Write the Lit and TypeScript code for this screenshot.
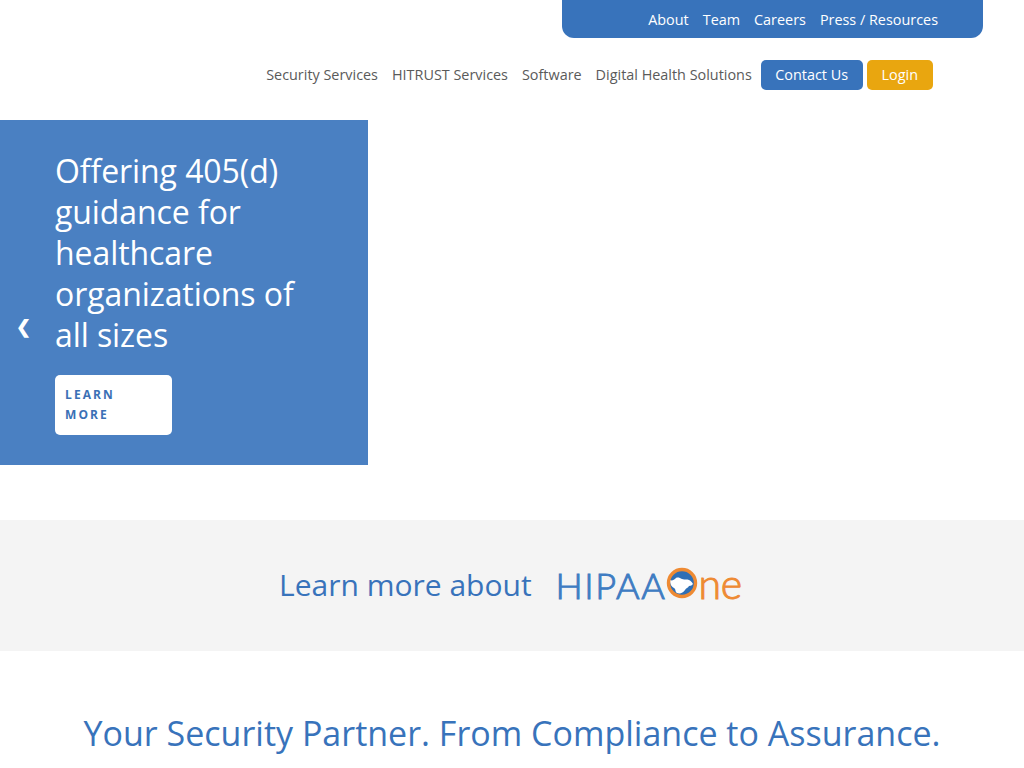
import { LitElement, css, html } from 'lit'
import { customElement } from 'lit/decorators.js'

@customElement('hipaa-logo')
export class HipaaLogo extends LitElement {
  static styles = css`
    :host {
      display: flex;
      align-items: center;
      height: 40px;
    }
    .word {
      font-family: 'Lato', 'Open Sans', sans-serif;
      font-weight: 300;
      line-height: 40px;
      -webkit-text-stroke: 1px currentColor;
    }
    .blue {
      color: #3f7cc2;
      font-size: 36px;
      letter-spacing: 1.6px;
      margin: -2px 0 0 0;
    }
    .orange {
      color: #ee8a33;
      font-size: 41px;
      letter-spacing: -0.2px;
      margin-top: -3px;
    }
    svg {
      display: block;
      margin: -5px 0 0 0;
    }
  `

  render() {
    return html`
      <span class="word blue">HIPAA</span>
      <svg width="32" height="32" viewBox="0 0 32 32" aria-hidden="true">
        <circle cx="16" cy="16" r="13.5" fill="#2f6fb5"></circle>
        <path d="M4 13c2 1 4 0 6-2 2-1 4 0 6 1 3 1 5 0 7 1 2 1 3 2 4 4-1 1-2 2-4 2-1 2-3 2-4 4-2 3-5 4-8 3-2-1-1-4-3-5-2-1-4-3-4-8z" fill="#fff"></path>
        <circle cx="16" cy="16" r="13.5" fill="none" stroke="#ee8a33" stroke-width="3.4"></circle>
      </svg>
      <span class="word orange">ne</span>
    `
  }
}

@customElement('app-root')
export class AppRoot extends LitElement {
  static styles = css`
    :host {
      display: block;
      width: 1024px;
      height: 768px;
      overflow: hidden;
      background: #fff;
      font-family: 'Open Sans', sans-serif;
      color: #5a5a5a;
    }
    a {
      color: inherit;
      text-decoration: none;
    }
    .top {
      display: flex;
      justify-content: flex-end;
      padding-right: 41px;
    }
    .top-nav {
      display: flex;
      gap: 14px;
      box-sizing: border-box;
      width: 421px;
      height: 38px;
      padding: 0 45px 0 0;
      justify-content: flex-end;
      align-items: center;
      background: #3873bb;
      border-radius: 0 0 12px 12px;
      color: #fff;
      font-size: 14.4px;
    }
    .main-nav {
      display: flex;
      align-items: center;
      justify-content: flex-end;
      height: 30px;
      margin-top: 22px;
      padding-right: 91px;
      font-size: 14.4px;
    }
    .main-nav a {
      margin-right: 14px;
      padding-bottom: 2px;
    }
    .main-nav a:nth-child(4) {
      margin-right: 9px;
    }
    .main-nav .btn {
      display: flex;
      align-items: center;
      box-sizing: border-box;
      height: 30px;
      padding: 0 14.5px 2px;
      margin-right: 4px;
      border-radius: 5px;
      color: #fff;
      background: #3873bb;
    }
    .main-nav .btn.login {
      margin-right: 0;
      padding: 0 15px 2px;
      background: #e9a60f;
    }
    .hero {
      box-sizing: border-box;
      position: relative;
      width: 368px;
      height: 345px;
      margin-top: 30px;
      padding: 30px 55px 0;
      background: #4a80c2;
      color: #fff;
    }
    .hero h2 {
      margin: 0;
      font-size: 32px;
      font-weight: 400;
      letter-spacing: -0.08px;
      line-height: 41px;
    }
    .prev {
      position: absolute;
      left: 16px;
      top: 190px;
      font-size: 18px;
      line-height: 32px;
      font-weight: 700;
    }
    .learn {
      display: block;
      box-sizing: border-box;
      width: 117px;
      height: 60px;
      margin-top: 20px;
      padding: 10px;
      background: #fff;
      border-radius: 5px;
      color: #3a70b5;
      font-size: 12px;
      font-weight: 700;
      letter-spacing: 2.1px;
      line-height: 20px;
      text-transform: uppercase;
    }
    .band {
      display: flex;
      align-items: center;
      justify-content: center;
      gap: 24px;
      box-sizing: border-box;
      height: 131px;
      margin-top: 55px;
      padding-right: 3px;
      background: #f4f4f4;
      color: #3873bb;
      font-size: 30px;
    }
    .band > span {
      padding-bottom: 2px;
    }
    h1 {
      margin: 55px 0 0;
      text-align: center;
      color: #3873bb;
      font-size: 34px;
      font-weight: 400;
      line-height: 54px;
    }
  `

  render() {
    return html`
      <div class="top">
        <nav class="top-nav">
          <a href="#">About</a>
          <a href="#">Team</a>
          <a href="#">Careers</a>
          <a href="#">Press / Resources</a>
        </nav>
      </div>
      <nav class="main-nav">
        <a href="#">Security Services</a>
        <a href="#">HITRUST Services</a>
        <a href="#">Software</a>
        <a href="#">Digital Health Solutions</a>
        <a href="#" class="btn">Contact Us</a>
        <a href="#" class="btn login">Login</a>
      </nav>
      <section class="hero">
        <span class="prev">❮</span>
        <h2>Offering 405(d) guidance for healthcare organizations of all sizes</h2>
        <a href="#" class="learn">Learn More</a>
      </section>
      <section class="band">
        <span>Learn more about</span>
        <hipaa-logo></hipaa-logo>
      </section>
      <h1>Your Security Partner. From Compliance to Assurance.</h1>
    `
  }
}
